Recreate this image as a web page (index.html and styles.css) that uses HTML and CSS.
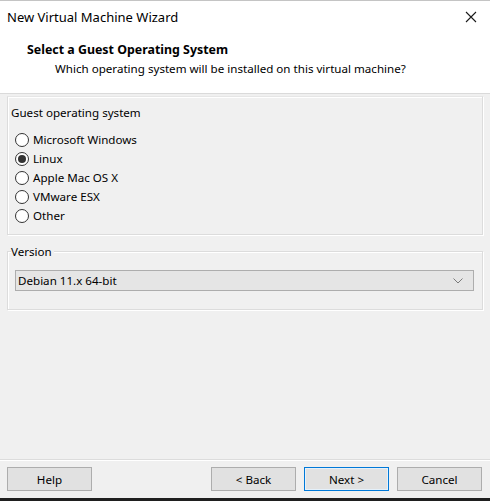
FILE: index.html
```html
<!DOCTYPE html>
<html>
<head>
<meta charset="utf-8">
<link rel="stylesheet" href="styles.css">
</head>
<body>
<div class="window">
  <div class="titlebar">
    <span class="title">New Virtual Machine Wizard</span>
    <svg class="close" width="12" height="12" viewBox="0 0 12 12"><path d="M1 1 L11 11 M11 1 L1 11" stroke="#1a1a1a" stroke-width="1.1" fill="none"/></svg>
  </div>
  <div class="header">
    <div class="h-title">Select a Guest Operating System</div>
    <div class="h-sub">Which operating system will be installed on this virtual machine?</div>
  </div>
  <div class="content">
    <div class="group group-os">
      <div class="legend">Guest operating system</div>
      <div class="radios">
        <div class="radio"><span class="dot"></span><span>Microsoft Windows</span></div>
        <div class="radio checked"><span class="dot"></span><span>Linux</span></div>
        <div class="radio"><span class="dot"></span><span>Apple Mac OS X</span></div>
        <div class="radio"><span class="dot"></span><span>VMware ESX</span></div>
        <div class="radio"><span class="dot"></span><span>Other</span></div>
      </div>
    </div>
    <div class="group group-ver">
      <div class="legend">Version</div>
      <div class="select">
        <span>Debian 11.x 64-bit</span>
        <svg class="chev" width="10" height="6" viewBox="0 0 10 6"><path d="M0.5 0.5 L5 5 L9.5 0.5" stroke="#7a7a7a" stroke-width="1" fill="none"/></svg>
      </div>
    </div>
  </div>
  <div class="footer">
    <div class="btn">Help</div>
    <div class="spacer"></div>
    <div class="btn">&lt; Back</div>
    <div class="btn default">Next &gt;</div>
    <div class="btn">Cancel</div>
  </div>
  <div class="taskbar"></div>
</div>
</body>
</html>
```
FILE: styles.css
```css
* { box-sizing: border-box; }
html, body { margin: 0; padding: 0; }
body {
  width: 490px;
  height: 501px;
  overflow: hidden;
  background: #f0f0f0;
  font-family: "Noto Sans", "Open Sans", sans-serif;
  font-size: 11.6px;
  color: #000;
}
.window {
  display: flex;
  flex-direction: column;
  height: 501px;
  border-top: 1px solid #c4c4c4;
}
.titlebar {
  height: 31px;
  background: #fff;
  display: flex;
  align-items: center;
  justify-content: space-between;
  padding: 0 13px 0 7px;
}
.title { font-size: 13px; }
.close { display: block; }
.header {
  background: #fff;
  height: 62px;
  border-bottom: 1px solid #dadada;
  padding: 9px 0 0 27px;
}
.h-title { font-weight: bold; line-height: 18px; font-size: 12.4px; }
.h-sub { padding-left: 28px; line-height: 20px; }
.content {
  flex: 1;
  padding: 2px 7px 0 7px;
  display: flex;
  flex-direction: column;
}
.group {
  border: 1px solid #dcdcdc;
  box-shadow: inset 1px 1px 0 #fff, 1px 1px 0 #fff;
  position: relative;
}
.group-os {
  height: 139px;
  border-top-color: #e6e6e6;
  padding: 8px 0 0 3px;
}
.group-ver {
  margin-top: 16px;
  height: 59px;
  padding: 18px 8px 0 7px;
}
.legend {
  line-height: 16px;
  background: #f0f0f0;
  padding-right: 2px;
}
.group-ver .legend {
  position: absolute;
  top: -8px;
  left: 3px;
}
.radios {
  margin-top: 9px;
  padding-left: 4px;
  display: flex;
  flex-direction: column;
}
.radio {
  height: 19px;
  display: flex;
  align-items: center;
  gap: 4px;
}
.dot {
  width: 14px;
  height: 14px;
  border: 1px solid #333;
  border-radius: 50%;
  background: #fff;
  display: flex;
  align-items: center;
  justify-content: center;
}
.radio.checked .dot::after {
  content: "";
  width: 8px;
  height: 8px;
  border-radius: 50%;
  background: #333;
}
.select {
  height: 21px;
  background: #e5e5e5;
  border: 1px solid #adadad;
  display: flex;
  align-items: center;
  justify-content: space-between;
  padding: 0 10px 0 2px;
}
.footer {
  margin-top: auto;
  border-top: 1px solid #dcdcdc;
  box-shadow: inset 0 1px 0 #fff;
  height: 39px;
  padding: 7px 8px 0 7px;
  display: flex;
  gap: 8px;
}
.spacer { flex: 1; }
.btn {
  width: 85px;
  height: 24px;
  background: #e1e1e1;
  border: 1px solid #adadad;
  display: flex;
  align-items: center;
  justify-content: center;
}
.btn.default {
  border: 1px solid #0078d7;
  box-shadow: inset 0 0 0 1px #e5f1fb;
}
.taskbar {
  height: 3px;
  background: #1f1f1f;
}
```
